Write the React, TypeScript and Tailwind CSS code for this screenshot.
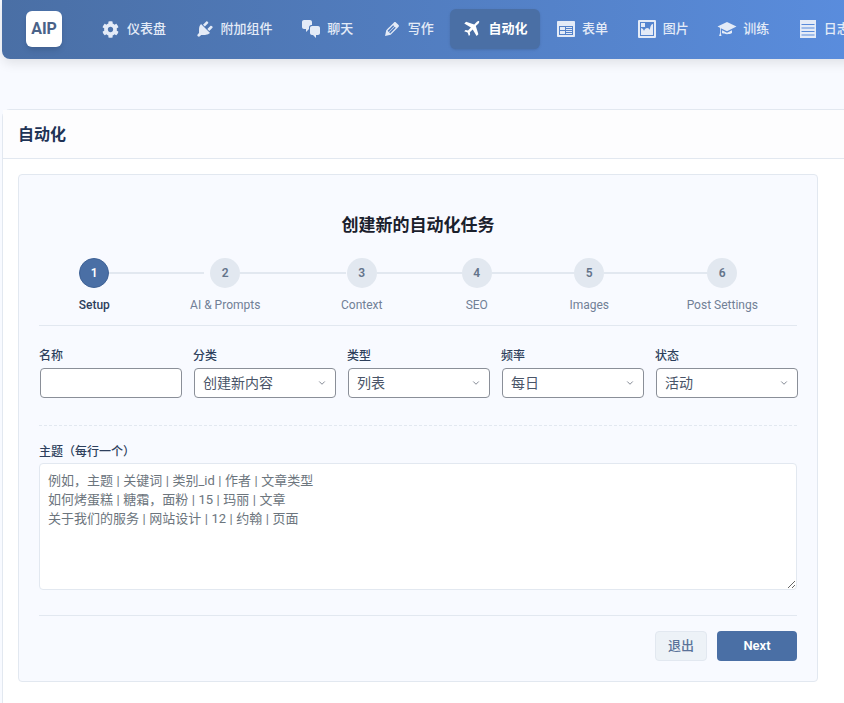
import React from 'react';
import { ChevronDown } from 'lucide-react';
import { FaCog } from 'react-icons/fa';

function Icon({ d, evenodd }: { d: string; evenodd?: boolean }) {
    return (
        <svg viewBox="0 0 20 20" className="w-5 h-5 shrink-0" fill="currentColor">
            <path d={d} fillRule={evenodd ? 'evenodd' : 'nonzero'} />
        </svg>
    );
}

const navItems = [
    { label: '仪表盘', icon: '' },
    { label: '附加组件', icon: 'M13.11 4.36L9.87 7.6 8 5.73l3.24-3.24c.35-.34 1.05-.2 1.56.32.52.51.66 1.21.31 1.55zm-8 1.77l.91-1.12 9.01 9.01-1.19.84c-.71.71-2.63 1.16-3.82 1.16H6.14L4.9 17.26c-.59.59-1.54.59-2.12 0a1.49 1.49 0 0 1 0-2.12l1.24-1.24v-3.88c0-1.13.4-3.19 1.09-3.89zm7.26 3.97l3.24-3.24c.34-.35 1.04-.21 1.55.31.52.51.66 1.21.31 1.55l-3.24 3.25z' },
    { label: '聊天', icon: 'M11 6h-.82C9.07 6 8 7.2 8 8.16V10l-3 3v-3H3c-1.1 0-2-.9-2-2V3c0-1.1.9-2 2-2h6c1.1 0 2 .9 2 2v3zm0 1h6c1.1 0 2 .9 2 2v5c0 1.1-.9 2-2 2h-2v3l-3-3h-1c-1.1 0-2-.9-2-2V9c0-1.1.9-2 2-2z' },
    { label: '写作', icon: 'M13.89 3.39l2.71 2.72c.46.46.42 1.24.03 1.64l-8.01 8.02-5.56 1.16 1.16-5.58s7.6-7.63 7.99-8.03c.39-.39 1.22-.39 1.68.07zm-2.73 2.79l-5.59 5.61 1.11 1.11 5.54-5.65zm-2.97 8.23l5.58-5.6-1.07-1.08-5.59 5.6z' },
    { label: '自动化', active: true, icon: 'M17.6 2.4c-.7-.7-1.900-.5-2.700.3L12.200 5.400 4.100 2.800 2.300 4.600l6.600 3.900-2.900 2.900-2.400-.3L2.200 12.300l3.400 1.300 1.300 3.400 1.200-1.300-.3-2.400 2.900-2.900 3.900 6.600 1.800-1.800-2.600-8.100 2.700-2.700c.8-.8 1-2 .3-2.700z' },
    { label: '表单', evenodd: true, icon: 'M2 2h16c.55 0 1 .45 1 1v14c0 .55-.45 1-1 1H2c-.55 0-1-.45-1-1V3c0-.55.45-1 1-1zm15 14V7H3v9h14zM9 8v3H4V8h5zm7 0v1h-6V8h6zm0 2v1h-6v-1h6zm-7 2v3H4v-3h5zm7 0v1h-6v-1h6zm0 2v1h-6v-1h6z' },
    { label: '图片', evenodd: true, icon: 'M2.25 1h15.5c.69 0 1.25.56 1.25 1.25v15.5c0 .69-.56 1.25-1.25 1.25H2.25C1.56 19 1 18.44 1 17.75V2.25C1 1.56 1.56 1 2.25 1zM17 17V3H3v14h14zM4 4h4v4H4zM16 5v11H4V9c2 0 3 3 3 3s1-3 3-3 3 2 3 2 0-6 3-6z' },
    { label: '训练', icon: 'M10 3 .5 7.500 3 8.700V14l-.9 3h2.400l-.7-3V9.200l6.200 3 9.500-4.700zM5 11.300V14c2 1.600 8 1.600 10 0v-2.700l-5 2.500z' },
    { label: '日志', evenodd: true, icon: 'M2 1h16v18H2zM3.500 5v1h13V5zM3.500 8.500v1h13v-1zM3.500 12v1h13v-1zM3.500 15.500v1h13v-1z' },
];

const steps = [
    { label: 'Setup', width: 'w-[32px]', line: 'w-[95px]' },
    { label: 'AI & Prompts', width: 'w-[73px]', line: 'w-[106px]' },
    { label: 'Context', width: 'w-[43px]', line: 'w-[85px]' },
    { label: 'SEO', width: 'w-[30px]', line: 'w-[83px]' },
    { label: 'Images', width: 'w-[38px]', line: 'w-[103px]' },
    { label: 'Post Settings', width: 'w-[71px]', line: 'hidden' },
];

const selects = [
    { label: '分类', options: ['创建新内容'] },
    { label: '类型', options: ['列表'] },
    { label: '频率', options: ['每日'] },
    { label: '状态', options: ['活动'] },
];

const placeholder = '例如，主题 | 关键词 | 类别_id | 作者 | 文章类型\n如何烤蛋糕 | 糖霜，面粉 | 15 | 玛丽 | 文章\n关于我们的服务 | 网站设计 | 12 | 约翰 | 页面';

export default function App() {
    return (
        <div className="w-[844px] h-[703px] overflow-hidden bg-[#f8faff] pl-[2px] font-['Roboto','Noto_Sans_CJK_SC',sans-serif]">
            <nav className="w-[920px] h-[59px] flex items-center gap-[3.6px] pl-[24px] pb-px rounded-bl-lg bg-gradient-to-r from-[#4a6fa5] to-[#5b8fe2] shadow-[0_4px_12px_rgba(0,0,0,0.1)]">
                <div className="w-9 h-9 shrink-0 mr-[23.400px] flex items-center justify-center rounded-md bg-white text-[#4a6288] text-[16px] font-bold shadow-md">AIP</div>
                {navItems.map((item) => (
                    <a
                        key={item.label}
                        className={`h-10 shrink-0 flex items-center gap-[6px] pl-[12px] pr-[13px] rounded-md text-[13px] font-medium ${item.active ? 'bg-[#4a6fa5] text-white font-semibold shadow-sm' : 'text-[#e4ebf7]'}`}
                    >
                        {item.icon ? (
                            <Icon d={item.icon} evenodd={item.evenodd} />
                        ) : (
                            <span className="w-5 h-5 shrink-0 flex items-center justify-center"><FaCog className="text-[17px]" /></span>
                        )}
                        {item.label}
                    </a>
                ))}
            </nav>

            <div className="mt-[50px] w-[860px] h-[620px] bg-white border border-[#e2e8f0] rounded-t-lg">
                <div className="h-[49px] flex items-center px-[15px] pt-px border-b border-[#e2e8f0] bg-[#fdfdfe]">
                    <h1 className="text-[16px] font-semibold text-[#1e3355]">自动化</h1>
                </div>

                <div className="mt-[15px] ml-[15px] w-[800px] h-[508px] bg-[#f8faff] border border-[#e2e8f0] rounded px-5 pt-[37px]">
                    <h2 className="text-[17px] leading-[26px] font-semibold text-center text-[#1a202c]">创建新的自动化任务</h2>

                    <div className="mt-[20px] pb-[12px] flex justify-around border-b border-[#e2e8f0]">
                        {steps.map((step, i) => (
                            <div key={step.label} className={`relative flex flex-col items-center ${step.width}`}>
                                <div className={`absolute top-[14px] left-[calc(50%+15px)] h-[2px] bg-[#e2e8f0] ${step.line}`}></div>
                                <div className={`relative w-[30px] h-[30px] shrink-0 flex items-center justify-center rounded-full text-[12px] font-semibold ${i === 0 ? 'bg-[#4a6fa5] text-white border border-[#3f6296]' : 'bg-[#e2e8f0] text-[#64748b]'}`}>
                                    {i + 1}
                                </div>
                                <span className={`mt-[9px] text-[12px] leading-[16px] whitespace-nowrap ${i === 0 ? 'font-medium text-[#2d3f5c]' : 'font-normal text-[#718096]'}`}>{step.label}</span>
                            </div>
                        ))}
                    </div>

                    <div className="mt-[22px] flex gap-3 pl-px pr-0 w-[759px]">
                        <div className="flex-1">
                            <label className="block -ml-px mb-[4px] text-[12px] leading-[16px] font-medium text-[#2d3f5c]">名称</label>
                            <input className="block w-full h-[30px] px-2 bg-white border border-[#8a8f98] rounded text-[14px]" />
                        </div>
                        {selects.map((s) => (
                            <div key={s.label} className="flex-1">
                                <label className="block -ml-px mb-[4px] text-[12px] leading-[16px] font-medium text-[#2d3f5c]">{s.label}</label>
                                <div className="relative">
                                    <select className="block w-full h-[30px] pl-2 pr-6 appearance-none bg-white border border-[#8a8f98] rounded text-[14px] text-[#4a5568]">
                                        {s.options.map((o) => <option key={o}>{o}</option>)}
                                    </select>
                                    <ChevronDown className="absolute right-[9px] top-[10px] w-[10px] h-[10px] text-[#6b7280] pointer-events-none" />
                                </div>
                            </div>
                        ))}
                    </div>

                    <div className="mt-[27px] border-t border-dashed border-[#e2e8f0]"></div>

                    <label className="block mt-[18px] mb-[3px] text-[12px] leading-[16px] font-medium text-[#2d3f5c]">主题（每行一个）</label>
                    <textarea
                        className="block w-full h-[127px] px-2 pt-[8px] pb-2 bg-white border border-[#e2e8f0] rounded text-[13px] leading-[18.800px] [word-spacing:0.3px] resize-y placeholder:text-[#6c757d]"
                        placeholder={placeholder}
                    ></textarea>

                    <div className="mt-[25px] pt-[15px] flex justify-end gap-[10px] border-t border-[#e2e8f0]">
                        <button className="w-[52px] h-[30px] bg-[#edf2f7] border border-[#e2e8f0] rounded text-[13px] font-medium text-[#5a7299]">退出</button>
                        <button className="w-[80px] h-[30px] bg-[#4a6fa5] rounded text-[13px] font-semibold text-white">Next</button>
                    </div>
                </div>
            </div>
        </div>
    );
}
